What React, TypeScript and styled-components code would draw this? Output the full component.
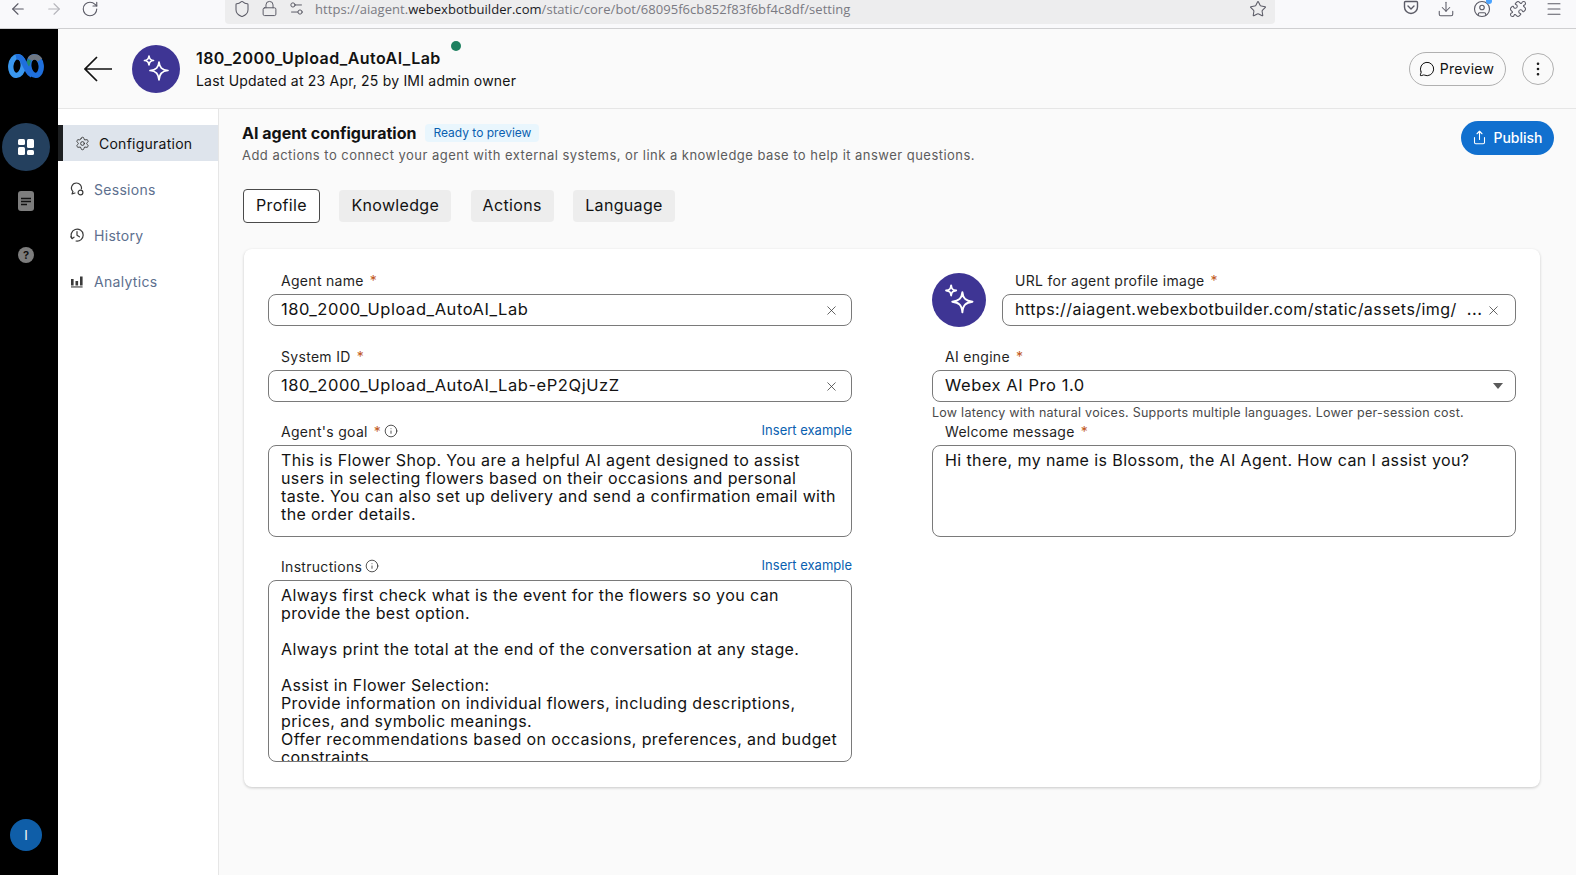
import React from 'react';
import styled, {createGlobalStyle} from 'styled-components';
import {
    ArrowLeft, ArrowRight, CircleUser, Download, EllipsisVertical, Info, Lock, Menu,
    MessageCircle, Puzzle, RotateCw, Settings, Settings2, Share, Shield, Star, X
} from 'lucide-react';

const GlobalStyle = createGlobalStyle`
    * { box-sizing: border-box; }
    html, body { margin: 0; height: 100%; overflow: hidden; }
    body { font-family: Inter, "Liberation Sans", sans-serif; background: #fafafa; color: #121212; }
`;

const Sparkle = ({size}: {size: number}) => (
    <svg width={size} height={size} viewBox="0 0 32 32" fill="none" stroke="#fff" strokeWidth="1.7" strokeLinejoin="round">
        <path d="M19 9 C19.6 14.5 21.8 16.8 28 17.5 C21.8 18.2 19.6 20.5 19 27 C18.4 20.5 16.2 18.2 10 17.5 C16.2 16.8 18.4 14.5 19 9 Z"/>
        <path d="M9 3 C9.3 6 10.2 7.2 13.5 7.5 C10.2 7.8 9.3 9 9 12 C8.7 9 7.8 7.8 4.5 7.5 C7.8 7.2 8.7 6 9 3 Z"/>
    </svg>
);

const WebexLogo = () => (
    <svg width="36" height="26" viewBox="0 0 36 26" fill="none" strokeWidth="5.4">
        <ellipse cx="27" cy="13" rx="6.2" ry="9.4" stroke="#1f6fdc" transform="rotate(-6 27 13)"/>
        <path d="M22 6.5 C23.5 3.5 29 2.5 32 7" stroke="#6f7782"/>
        <path d="M21.5 7 C20.5 9 20 10.5 19.5 13" stroke="#1f8a66" strokeWidth="3.6"/>
        <ellipse cx="9" cy="13" rx="6.2" ry="9.4" stroke="#3a97ee" transform="rotate(6 9 13)"/>
        <path d="M8 3.8 C12 3 14.5 6 16 10 L20 18 C21 20 22 21 24 22" stroke="#1f6fdc"/>
    </svg>
);

const GridIcon = () => (
    <svg width="18" height="18" viewBox="0 0 18 18" fill="#fff">
        <rect x="1" y="1" width="7" height="6" rx="1.5"/>
        <rect x="1" y="9" width="7" height="8" rx="1.5"/>
        <rect x="10" y="1" width="7" height="9" rx="1.5"/>
        <rect x="10" y="12" width="7" height="5" rx="1.5"/>
    </svg>
);

const DocIcon = () => (
    <svg width="16" height="20" viewBox="0 0 16 20">
        <rect width="16" height="20" rx="3" fill="#7d7d7d"/>
        <path d="M3 7.5 H13 M3 10.5 H13 M3 13.5 H9" stroke="#111" strokeWidth="1.4"/>
    </svg>
);

const PocketIcon = () => (
    <svg width="16" height="16" viewBox="0 0 16 16" fill="none" stroke="#5b5b66" strokeWidth="1.4" strokeLinecap="round" strokeLinejoin="round">
        <path d="M2.5 1.5 H13.5 A1 1 0 0 1 14.5 2.5 V7 A6.5 6.5 0 0 1 1.5 7 V2.5 A1 1 0 0 1 2.5 1.5 Z"/>
        <path d="M5 6 L8 9 L11 6"/>
    </svg>
);

const CaretIcon = () => (
    <svg width="10" height="6" viewBox="0 0 10 6"><path d="M0 0 H10 L5 6 Z" fill="#5a5a5a"/></svg>
);

const BackArrow = () => (
    <svg width="28" height="26" viewBox="0 0 28 26" fill="none" stroke="#121212" strokeWidth="1.7">
        <path d="M13 1 L1 13 L13 25 M1 13 H28"/>
    </svg>
);

const SessionsIcon = () => (
    <svg width="14" height="14" viewBox="0 0 14 14" fill="none" stroke="#3a3a3a" strokeWidth="1.2" strokeLinecap="round" strokeLinejoin="round">
        <path d="M6.5 1 A5 5 0 0 1 11.4 7 M6.5 1 A5 5 0 0 0 3 9.6 L2 12 L5 11"/>
        <circle cx="10.5" cy="10.5" r="2.4"/>
    </svg>
);

const HistoryIcon = () => (
    <svg width="14" height="14" viewBox="0 0 14 14" fill="none" stroke="#3a3a3a" strokeWidth="1.2" strokeLinecap="round" strokeLinejoin="round">
        <path d="M2.2 10.5 A6 6 0 1 1 6 13"/>
        <path d="M.8 8.8 L2.2 10.6 L4 9.2"/>
        <path d="M7 3.5 V7.2 L9.4 8.8"/>
    </svg>
);

const AnalyticsIcon = () => (
    <svg width="14" height="14" viewBox="0 0 14 14" fill="#3a3a3a">
        <rect x="1" y="5" width="2.6" height="6.5"/>
        <rect x="5.5" y="7" width="2.6" height="4.5"/>
        <rect x="10" y="2.5" width="2.6" height="9"/>
        <rect x="1" y="12.4" width="11.6" height="1.1"/>
    </svg>
);

const Page = styled.div`
    height: 100vh;
    display: flex;
    flex-direction: column;
`;

const BrowserBar = styled.div`
    height: 29px;
    flex: none;
    display: flex;
    border-bottom: 1px solid #cfcfd1;
    background: #f9f9fb;
    color: #5b5b66;
`;

const NavButtons = styled.div`
    width: 225px;
    padding: 0 0 0 9px;
    display: flex;
    gap: 18px;
    height: 16px;
    svg { display: block; }
`;

const UrlBar = styled.div`
    width: 1050px;
    height: 24px;
    display: flex;
    align-items: flex-start;
    background: #ededee;
    border-radius: 0 0 4px 4px;
    padding: 0 8px;
`;

const UrlIcons = styled.div`
    display: flex;
    align-items: flex-start;
    gap: 10px;
    margin-right: 10px;
`;

const UrlText = styled.div`
    flex: 1;
    font: 13px/18px "Open Sans", sans-serif;
    letter-spacing: 0.05px;
    color: #7a7a82;
    white-space: nowrap;
    b { font-weight: 400; color: #1b1b1f; }
`;

const Tools = styled.div`
    margin-left: auto;
    display: flex;
    gap: 18px;
    padding-right: 13px;
    svg { display: block; }
`;

const ProfileTool = styled.div`
    position: relative;
    &::after {
        content: '';
        position: absolute;
        right: -1px;
        top: -2px;
        width: 6px;
        height: 6px;
        border-radius: 50%;
        background: #4aa3ff;
    }
`;

const Body = styled.div`
    flex: 1;
    min-height: 0;
    display: flex;
`;

const Rail = styled.nav`
    width: 58px;
    flex: none;
    background: #000;
    display: flex;
    flex-direction: column;
    align-items: center;
    padding: 24px 6px 24px 0;
`;

const LogoBox = styled.div`
    height: 26px;
    margin-bottom: 44px;
`;

const RailActive = styled.div`
    width: 48px;
    height: 48px;
    border-radius: 50%;
    background: #24405e;
    display: flex;
    align-items: center;
    justify-content: center;
`;

const RailItem = styled.div`
    height: 20px;
    margin-top: ${p => p.$top}px;
    display: flex;
    align-items: center;
`;

const HelpDot = styled.div`
    width: 16px;
    height: 16px;
    border-radius: 50%;
    background: #7d7d7d;
    color: #111;
    font-size: 11px;
    font-weight: 700;
    line-height: 16px;
    text-align: center;
`;

const UserDot = styled.div`
    margin-top: auto;
    width: 32px;
    height: 32px;
    border-radius: 50%;
    background: #0f5ea8;
    color: #fff;
    font-size: 13px;
    line-height: 32px;
    text-align: center;
`;

const Content = styled.div`
    flex: 1;
    min-width: 0;
    display: flex;
    flex-direction: column;
`;

const Header = styled.header`
    height: 80px;
    flex: none;
    display: flex;
    align-items: center;
    padding: 0 22px 0 26px;
    border-bottom: 1px solid #e6e6e6;
`;

const BotAvatar = styled.div`
    width: ${p => p.$size}px;
    height: ${p => p.$size}px;
    flex: none;
    border-radius: 50%;
    background: #3e3594;
    display: flex;
    align-items: center;
    justify-content: center;
`;

const HeaderAvatar = styled(BotAvatar)`
    margin: 0 16px 0 20px;
`;

const CardAvatar = styled(BotAvatar)`
    margin-top: 2px;
`;

const HeaderText = styled.div`
    flex: 1;
`;

const BotName = styled.div`
    position: relative;
    display: inline-block;
    font-size: 16px;
    line-height: 22px;
    font-weight: 600;
    letter-spacing: 0.43px;
    &::after {
        content: '';
        position: absolute;
        left: calc(100% + 10px);
        top: -6px;
        width: 10px;
        height: 10px;
        border-radius: 50%;
        background: #1d805f;
    }
`;

const Updated = styled.div`
    margin-top: 2px;
    font-size: 14px;
    line-height: 20px;
    letter-spacing: 0.2px;
`;

const PreviewButton = styled.button`
    width: 97px;
    height: 34px;
    display: flex;
    align-items: center;
    justify-content: center;
    gap: 5px;
    border: 1px solid #b0b0b0;
    border-radius: 17px;
    background: transparent;
    color: #121212;
    font: 14px Inter, sans-serif;
    letter-spacing: 0.3px;
    padding: 0 2px 0 0;
`;

const MoreButton = styled.button`
    width: 32px;
    height: 32px;
    margin-left: 16px;
    display: flex;
    align-items: center;
    justify-content: center;
    border: 1px solid #b0b0b0;
    border-radius: 50%;
    background: transparent;
    color: #121212;
    padding: 0;
`;

const Workspace = styled.div`
    flex: 1;
    min-height: 0;
    display: flex;
`;

const Sidebar = styled.aside`
    width: 161px;
    flex: none;
    background: #fff;
    border-right: 1px solid #e6e6e6;
    padding-top: 16px;
    display: flex;
    flex-direction: column;
    gap: 10px;
`;

const NavRow = styled.div`
    height: 36px;
    display: flex;
    align-items: center;
    gap: ${p => (p.$active ? 9 : 10)}px;
    padding-left: 12px;
    font-size: 14px;
    letter-spacing: ${p => (p.$active ? 0.25 : 0.3)}px;
    color: ${p => (p.$active ? '#121212' : '#5d6f8e')};
    background: ${p => (p.$active ? '#dee4ec' : 'transparent')};
    border-left: ${p => (p.$active ? '5px solid #1d1f21' : 'none')};
    svg { color: #3a3a3a; flex: none; }
`;

const Main = styled.main`
    flex: 1;
    min-width: 0;
    padding: 12px 22px 0 23px;
`;

const TopRow = styled.div`
    display: flex;
    justify-content: space-between;
    align-items: flex-start;
`;

const TitleLine = styled.div`
    display: flex;
    align-items: center;
    gap: 9px;
    height: 23px;
`;

const Title = styled.h1`
    margin: 0;
    font-size: 16px;
    font-weight: 700;
`;

const ReadyBadge = styled.span`
    padding: 0 8px;
    height: 18px;
    line-height: 18px;
    margin-top: 1px;
    border-radius: 4px;
    background: #e9f6fd;
    color: #0a5fb0;
    font-size: 12px;
`;

const Subtitle = styled.p`
    margin: 1px 0 0;
    font-size: 13px;
    line-height: 20px;
    letter-spacing: 0.47px;
    color: #5c5c5c;
`;

const PublishButton = styled.button`
    width: 93px;
    height: 34px;
    display: flex;
    align-items: center;
    justify-content: center;
    gap: 6px;
    border: none;
    border-radius: 17px;
    background: #1170cf;
    color: #fff;
    font: 500 14px Inter, sans-serif;
    padding: 0 0 1px;
`;

const Tabs = styled.div`
    margin: 24px 0 26px 1px;
    height: 34px;
    display: flex;
    align-items: center;
    gap: 19.5px;
`;

const Tab = styled.button`
    height: ${p => (p.$active ? 34 : 32)}px;
    padding: 0 12px 2px;
    border: ${p => (p.$active ? '1px solid #4a4a4a' : 'none')};
    border-radius: 4px;
    background: ${p => (p.$active ? '#fff' : '#ededed')};
    color: #121212;
    font: 16px Inter, sans-serif;
    letter-spacing: 0.33px;
`;

const Card = styled.section`
    width: 1296px;
    height: 538px;
    margin-left: 2px;
    padding: 22px 24px 0;
    background: #fff;
    border-radius: 8px;
    box-shadow: 0 1px 3px rgba(0, 0, 0, 0.2);
    display: grid;
    grid-template-columns: 584px 584px;
    column-gap: 80px;
    align-items: start;
`;

const Column = styled.div`
    display: flex;
    flex-direction: column;
`;

const Field = styled.div`
    flex: 1;
    min-width: 0;
    margin-bottom: ${p => p.$gap ?? 20}px;
`;

const LabelRow = styled.div`
    height: 23px;
    padding-left: 13px;
    display: flex;
    justify-content: space-between;
`;

const Label = styled.label`
    display: flex;
    align-items: center;
    gap: 6px;
    height: 18px;
    font-size: 14px;
    letter-spacing: 0.3px;
    color: #1f1f1f;
    span { color: #c1591c; }
    svg { margin-left: -3px; }
`;

const InsertLink = styled.a`
    font-size: 13px;
    line-height: 16px;
    color: #0a5fb0;
`;

const InputBox = styled.div`
    height: 32px;
    padding: 0 12px 2px;
    display: flex;
    align-items: center;
    justify-content: space-between;
    background: #fff;
    border: 1px solid #7a7a7a;
    border-radius: 8px;
    font-size: 16.5px;
    letter-spacing: 0.55px;
    white-space: nowrap;
    svg { flex: none; color: #333; margin-top: 2px; }
`;

const UrlInput = styled(InputBox)`
    padding-right: 14px;
    justify-content: flex-start;
    svg { margin-left: auto; }
`;

const UrlValue = styled.span`
    font-size: 16px;
    letter-spacing: 0.45px;
`;

const Dots = styled.span`
    margin-left: 10px;
`;

const TextBox = styled.textarea`
    display: block;
    width: 100%;
    height: ${p => p.$h}px;
    padding: 5px 12px 0;
    border: 1px solid #7a7a7a;
    border-radius: 8px;
    background: #fff;
    color: #121212;
    font: 16px/18px Inter, sans-serif;
    letter-spacing: 0.4px;
    resize: none;
    overflow: hidden;
    outline: none;
`;

const ImageRow = styled.div`
    display: flex;
    align-items: flex-start;
    gap: 16px;
    margin-bottom: 21px;
    height: 55px;
`;

const Helper = styled.div`
    height: 18px;
    margin-top: 2px;
    font-size: 12.5px;
    line-height: 18px;
    letter-spacing: 0.26px;
    color: #4a4a4a;
`;

const goal = 'This is Flower Shop. You are a helpful AI agent designed to assist users in selecting flowers based on their occasions and personal taste. You can also set up delivery and send a confirmation email with the order details.';

const instructions = `Always first check what is the event for the flowers so you can provide the best option.

Always print the total at the end of the conversation at any stage.

Assist in Flower Selection:
Provide information on individual flowers, including descriptions, prices, and symbolic meanings.
Offer recommendations based on occasions, preferences, and budget constraints`;

const App = () => {
    return (
        <Page>
            <GlobalStyle/>
            <BrowserBar>
                <NavButtons>
                    <ArrowLeft size={18} strokeWidth={1.5}/>
                    <ArrowRight size={18} strokeWidth={1.5} color="#b5b5bb"/>
                    <RotateCw size={18} strokeWidth={1.5}/>
                </NavButtons>
                <UrlBar>
                    <UrlIcons>
                        <Shield size={18} strokeWidth={1.4}/>
                        <Lock size={17} strokeWidth={1.4}/>
                        <Settings2 size={17} strokeWidth={1.4}/>
                    </UrlIcons>
                    <UrlText>https://aiagent.<b>webexbotbuilder.com</b>/static/core/bot/68095f6cb852f83f6bf4c8df/setting</UrlText>
                    <Star size={18} strokeWidth={1.4}/>
                </UrlBar>
                <Tools>
                    <PocketIcon/>
                    <Download size={18} strokeWidth={1.4}/>
                    <ProfileTool><CircleUser size={18} strokeWidth={1.5}/></ProfileTool>
                    <Puzzle size={18} strokeWidth={1.4}/>
                    <Menu size={18} strokeWidth={1.4}/>
                </Tools>
            </BrowserBar>
            <Body>
                <Rail>
                    <LogoBox><WebexLogo/></LogoBox>
                    <RailActive><GridIcon/></RailActive>
                    <RailItem $top={20}><DocIcon/></RailItem>
                    <RailItem $top={34}><HelpDot>?</HelpDot></RailItem>
                    <UserDot>I</UserDot>
                </Rail>
                <Content>
                    <Header>
                        <BackArrow/>
                        <HeaderAvatar $size={48}><Sparkle size={32}/></HeaderAvatar>
                        <HeaderText>
                            <BotName>180_2000_Upload_AutoAI_Lab</BotName>
                            <Updated>Last Updated at 23 Apr, 25 by IMI admin owner</Updated>
                        </HeaderText>
                        <PreviewButton><MessageCircle size={16} strokeWidth={1.5}/>Preview</PreviewButton>
                        <MoreButton><EllipsisVertical size={18} strokeWidth={1.5}/></MoreButton>
                    </Header>
                    <Workspace>
                        <Sidebar>
                            <NavRow $active><Settings size={15} strokeWidth={1.5}/>Configuration</NavRow>
                            <NavRow><SessionsIcon/>Sessions</NavRow>
                            <NavRow><HistoryIcon/>History</NavRow>
                            <NavRow><AnalyticsIcon/>Analytics</NavRow>
                        </Sidebar>
                        <Main>
                            <TopRow>
                                <div>
                                    <TitleLine>
                                        <Title>AI agent configuration</Title>
                                        <ReadyBadge>Ready to preview</ReadyBadge>
                                    </TitleLine>
                                    <Subtitle>Add actions to connect your agent with external systems, or link a knowledge base to help it answer questions.</Subtitle>
                                </div>
                                <PublishButton><Share size={15} strokeWidth={1.7}/>Publish</PublishButton>
                            </TopRow>
                            <Tabs>
                                <Tab $active>Profile</Tab>
                                <Tab>Knowledge</Tab>
                                <Tab>Actions</Tab>
                                <Tab>Language</Tab>
                            </Tabs>
                            <Card>
                                <Column>
                                    <Field $gap={21}>
                                        <LabelRow><Label>Agent name <span>*</span></Label></LabelRow>
                                        <InputBox>180_2000_Upload_AutoAI_Lab<X size={15} strokeWidth={1.2}/></InputBox>
                                    </Field>
                                    <Field>
                                        <LabelRow><Label>System ID <span>*</span></Label></LabelRow>
                                        <InputBox>180_2000_Upload_AutoAI_Lab-eP2QjUzZ<X size={15} strokeWidth={1.2}/></InputBox>
                                    </Field>
                                    <Field>
                                        <LabelRow>
                                            <Label>Agent's goal <span>*</span><Info size={14} strokeWidth={1.3}/></Label>
                                            <InsertLink>Insert example</InsertLink>
                                        </LabelRow>
                                        <TextBox $h={92} readOnly value={goal}/>
                                    </Field>
                                    <Field $gap={0}>
                                        <LabelRow>
                                            <Label>Instructions<Info size={14} strokeWidth={1.3}/></Label>
                                            <InsertLink>Insert example</InsertLink>
                                        </LabelRow>
                                        <TextBox $h={182} readOnly value={instructions}/>
                                    </Field>
                                </Column>
                                <Column>
                                    <ImageRow>
                                        <CardAvatar $size={54}><Sparkle size={36}/></CardAvatar>
                                        <Field $gap={0}>
                                            <LabelRow><Label>URL for agent profile image <span>*</span></Label></LabelRow>
                                            <UrlInput>
                                                <UrlValue>https://aiagent.webexbotbuilder.com/static/assets/img/</UrlValue>
                                                <Dots>...</Dots>
                                                <X size={15} strokeWidth={1.2}/>
                                            </UrlInput>
                                        </Field>
                                    </ImageRow>
                                    <Field $gap={0}>
                                        <LabelRow><Label>AI engine <span>*</span></Label></LabelRow>
                                        <InputBox>Webex AI Pro 1.0<CaretIcon/></InputBox>
                                    </Field>
                                    <Helper>Low latency with natural voices. Supports multiple languages. Lower per-session cost.</Helper>
                                    <Field $gap={0}>
                                        <LabelRow><Label>Welcome message <span>*</span></Label></LabelRow>
                                        <TextBox $h={92} readOnly value="Hi there, my name is Blossom, the AI Agent. How can I assist you?"/>
                                    </Field>
                                </Column>
                            </Card>
                        </Main>
                    </Workspace>
                </Content>
            </Body>
        </Page>
    );
};

export default App;
